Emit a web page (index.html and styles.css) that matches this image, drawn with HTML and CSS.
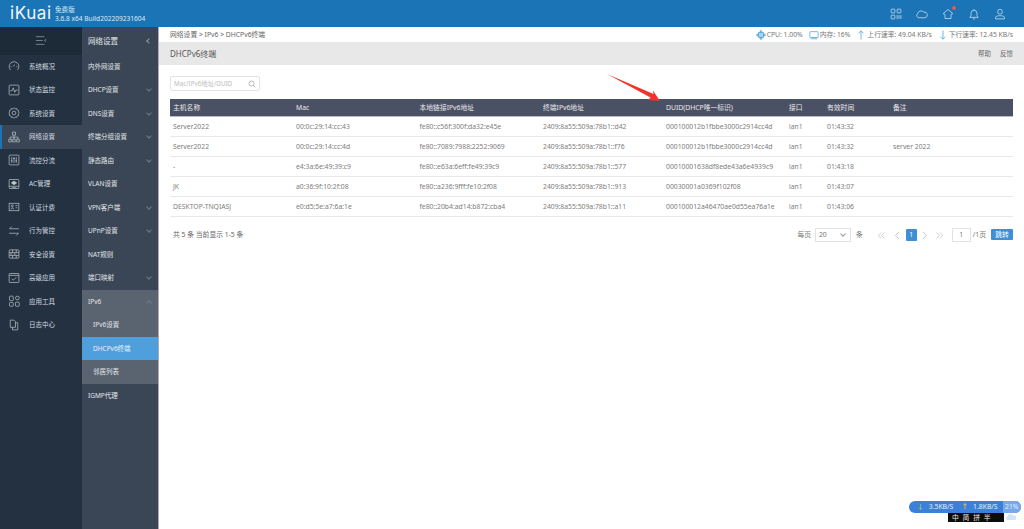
FILE: index.html
```html
<!DOCTYPE html>
<html lang="zh-CN">
<head>
    <meta charset="UTF-8">
    <title>iKuai</title>
    <link rel="stylesheet" href="styles.css">
</head>
<body>
    <header class="topbar">
        <div class="logo">iKuai</div>
        <div class="version">
            <div>免费版</div>
            <div>3.6.8 x64 Build202209231604</div>
        </div>
        <div class="top-icons">
            <svg class="top-icon" viewBox="0 0 16 16"><rect x="1.500" y="1.500" width="5" height="5" rx="1"/><rect x="9.500" y="1.500" width="5" height="5" rx="1"/><rect x="1.500" y="9.500" width="5" height="5" rx="1"/><path d="M9.500 9.500v5M12 9.500v5M14.500 9.500v5"/></svg>
            <svg class="top-icon" viewBox="0 0 16 16"><path d="M4 13a3 3 0 0 1-2-5.200A5 5 0 0 1 10.500 5.500 3.800 3.800 0 0 1 12 13z"/></svg>
            <span class="home-wrap">
                <svg class="top-icon" viewBox="0 0 16 16"><path d="M8 2 1.500 7.500l2.500 1V14h8V8.500l2.500-1z"/></svg>
                <span class="red-dot"></span>
            </span>
            <svg class="top-icon" viewBox="0 0 16 16"><path d="M2.500 12.500h11L12 10V7a4 4 0 0 0-8 0v3zM8 1.500V3M6.500 14.500h3"/></svg>
            <svg class="top-icon" viewBox="0 0 16 16"><circle cx="8" cy="5" r="3.200"/><path d="M2 14.500v-2c0-3 12-3 12 0v2z"/></svg>
        </div>
    </header>

    <div class="layout">
        <nav class="nav-main">
            <div class="nav-toggle">
                <svg class="toggle-icon" viewBox="0 0 14 12"><path d="M1 1.500h10M1 6h8M1 10.500h10M13 4.500 11 6l2 1.500"/></svg>
            </div>
            <a class="nav-item"><svg viewBox="0 0 16 16"><path d="M3.500 13.500a6.500 6.500 0 1 1 9 0M3.500 9h1.500M11 9h1.500M8.500 6 7.500 8.500"/></svg>系统概况</a>
            <a class="nav-item"><svg viewBox="0 0 16 16"><rect x="1.500" y="1.500" width="13" height="13" rx="1"/><path d="M3 9h2.500L7 5l2 6 1.500-3H13"/></svg>状态监控</a>
            <a class="nav-item"><svg viewBox="0 0 16 16"><path d="M8 1l1.500 1.500 2-.5.700 2 2 .7-.5 2L15 8l-1.300 1.300.5 2-2 .7-.7 2-2-.5L8 15l-1.500-1.500-2 .5-.7-2-2-.7.5-2L1 8l1.300-1.300-.5-2 2-.7.7-2 2 .5z"/><circle cx="8" cy="8" r="2.500"/></svg>系统设置</a>
            <a class="nav-item active"><svg viewBox="0 0 16 16"><path d="M6 1.500h4v4H6zM1 11h3.500v3.500H1zM6.200 11h3.500v3.500H6.200zM11.500 11H15v3.500h-3.500zM8 5.500V11M2.800 11V8.200h10.400V11"/></svg>网络设置</a>
            <a class="nav-item"><svg viewBox="0 0 16 16"><rect x="1.500" y="1.500" width="13" height="13" rx="1"/><path d="M5 4v8M8 4v8M11 4v8M3.800 9h2.400M6.800 6h2.400M9.800 9h2.400"/></svg>流控分流</a>
            <a class="nav-item"><svg viewBox="0 0 16 16"><rect x="1.500" y="2" width="13" height="12" rx="1"/><path d="M1.500 11h13M5 12.500h6"/><path class="solid" d="M8 4l3.500 2.500L8 9 4.500 6.500z"/></svg>AC管理</a>
            <a class="nav-item"><svg viewBox="0 0 16 16"><rect x="1.500" y="3" width="13" height="10"/><path d="M4 11c0-2.500 3.500-2.500 3.500 0M10 6h2.500M10 9h2.500"/><circle cx="5.800" cy="6.500" r="1.300"/></svg>认证计费</a>
            <a class="nav-item"><svg viewBox="0 0 16 16"><path d="M14.500 5H2l3-3M1.500 11H14l-3 3"/></svg>行为管控</a>
            <a class="nav-item"><svg viewBox="0 0 16 16"><rect x="1.500" y="2.500" width="13" height="11" rx="1"/><path d="M1.500 6.200h13M1.500 9.800h13M6 2.500v3.700M11 2.500v3.700M4 6.200v3.600M9 6.200v3.600M6 9.800v3.700M11 9.800v3.700"/></svg>安全设置</a>
            <a class="nav-item"><svg viewBox="0 0 16 16"><rect x="1.500" y="2" width="13" height="12" rx="1"/><path d="M1.500 4.500h13M5 9l2 2 4-4"/></svg>高级应用</a>
            <a class="nav-item"><svg viewBox="0 0 16 16"><rect x="2" y="1.500" width="5" height="6" rx="1"/><rect x="10" y="1.500" width="5" height="5" rx="2.500"/><rect x="2" y="10" width="5" height="5" rx="1"/><rect x="10" y="9.500" width="5" height="5.500" rx="1"/></svg>应用工具</a>
            <a class="nav-item"><svg viewBox="0 0 16 16"><path d="M3 1.500h5l2 2V11H3zM10 5h3v9.500H6V11"/></svg>日志中心</a>
        </nav>

        <aside class="nav-sub">
            <div class="sub-head">网络设置<span class="chev-left"></span></div>
            <a class="sub-item">内外网设置</a>
            <a class="sub-item">DHCP设置<span class="chev"></span></a>
            <a class="sub-item">DNS设置<span class="chev"></span></a>
            <a class="sub-item">终端分组设置<span class="chev"></span></a>
            <a class="sub-item">静态路由<span class="chev"></span></a>
            <a class="sub-item">VLAN设置</a>
            <a class="sub-item">VPN客户端<span class="chev"></span></a>
            <a class="sub-item">UPnP设置<span class="chev"></span></a>
            <a class="sub-item">NAT规则</a>
            <a class="sub-item">端口映射<span class="chev"></span></a>
            <a class="sub-item open">IPv6<span class="chev up"></span></a>
            <a class="sub-item open child">IPv6设置</a>
            <a class="sub-item child current">DHCPv6终端</a>
            <a class="sub-item open child">邻居列表</a>
            <a class="sub-item">IGMP代理</a>
        </aside>

        <main class="content">
            <div class="crumb-bar">
                <div class="crumbs">网络设置 &gt; IPv6 &gt; DHCPv6终端</div>
                <div class="stats">
                    <span class="stat"><svg viewBox="0 0 12 12" class="stat-icon cpu"><path d="M3 3h6v6H3zM1 5h2v2H1zM9 5h2v2H9zM5 1h2v2H5zM5 9h2v2H5z"/></svg>CPU: 1.00%</span>
                    <span class="stat"><svg viewBox="0 0 12 12" class="stat-icon"><rect x="1" y="2" width="10" height="7" rx="1"/><path d="M2 10.500h8"/></svg>内存: 16%</span>
                    <span class="stat"><svg viewBox="0 0 12 12" class="stat-icon"><path d="M6 11.500V1M3 4l3-3 3 3"/></svg>上行速率: 49.04 KB/s</span>
                    <span class="stat"><svg viewBox="0 0 12 12" class="stat-icon"><path d="M6 .5V11M3 8l3 3 3-3"/></svg>下行速率: 12.45 KB/s</span>
                </div>
            </div>
            <div class="title-bar">
                <span class="page-title">DHCPv6终端</span>
                <span class="title-links"><span>帮助</span><span>反馈</span></span>
            </div>

            <div class="panel">
                <div class="search">
                    <span>Mac/IPv6地址/DUID</span>
                    <svg viewBox="0 0 12 12"><circle cx="5.300" cy="5.300" r="3.800"/><path d="M8 8l2.800 2.800"/></svg>
                </div>

                <table class="grid">
                    <colgroup>
                        <col class="c-host"><col class="c-mac"><col class="c-link"><col class="c-addr"><col class="c-duid"><col class="c-if"><col class="c-time"><col>
                    </colgroup>
                    <thead>
                        <tr><th>主机名称</th><th>Mac</th><th>本地链接IPv6地址</th><th>终端IPv6地址</th><th>DUID(DHCP唯一标识)</th><th>接口</th><th>有效时间</th><th>备注</th></tr>
                    </thead>
                    <tbody>
                        <tr><td>Server2022</td><td>00:0c:29:14:cc:43</td><td>fe80::c56f:300f:da32:e45e</td><td>2409:8a55:509a:78b1::d42</td><td>000100012b1fbbe3000c2914cc4d</td><td>lan1</td><td>01:43:32</td><td></td></tr>
                        <tr><td>Server2022</td><td>00:0c:29:14:cc:4d</td><td>fe80::7089:7988:2252:9069</td><td>2409:8a55:509a:78b1::f76</td><td>000100012b1fbbe3000c2914cc4d</td><td>lan1</td><td>01:43:32</td><td>server 2022</td></tr>
                        <tr><td>-</td><td>e4:3a:6e:49:39:c9</td><td>fe80::e63a:6eff:fe49:39c9</td><td>2409:8a55:509a:78b1::577</td><td>00010001638df8ede43a6e4939c9</td><td>lan1</td><td>01:43:18</td><td></td></tr>
                        <tr><td>JK</td><td>a0:36:9f:10:2f:08</td><td>fe80::a236:9fff:fe10:2f08</td><td>2409:8a55:509a:78b1::913</td><td>00030001a0369f102f08</td><td>lan1</td><td>01:43:07</td><td></td></tr>
                        <tr><td>DESKTOP-TNQIASJ</td><td>e0:d5:5e:a7:6a:1e</td><td>fe80::20b4:ad14:b872:cba4</td><td>2409:8a55:509a:78b1::a11</td><td>000100012a46470ae0d55ea76a1e</td><td>lan1</td><td>01:43:06</td><td></td></tr>
                    </tbody>
                </table>

                <div class="table-foot">
                    <span class="total">共 5 条 当前显示 1-5 条</span>
                    <div class="pager">
                        <span>每页</span>
                        <span class="page-size">20<span class="chev grey"></span></span>
                        <span class="after-size">条</span>
                        <svg class="pg" viewBox="0 0 14 12"><path d="M6.500 1.500 2 6l4.500 4.500M11.500 1.500 7 6l4.500 4.500"/></svg>
                        <svg class="pg prev" viewBox="0 0 8 12"><path d="M6.500 1.500 2 6l4.500 4.500"/></svg>
                        <span class="page-current">1</span>
                        <svg class="pg next" viewBox="0 0 8 12"><path d="M1.500 1.500 6 6l-4.500 4.500"/></svg>
                        <svg class="pg" viewBox="0 0 14 12"><path d="M2.500 1.500 7 6l-4.500 4.500M7.500 1.500 12 6l-4.500 4.500"/></svg>
                        <span class="page-input">1</span>
                        <span>/1页</span>
                        <span class="go">跳转</span>
                    </div>
                </div>
            </div>
        </main>
    </div>

    <!-- annotation drawn on the screenshot -->
    <svg class="arrow" viewBox="0 0 56 30"><path d="M1 1 L47.500 21 L47 17.500 L54 28 L42 27 L44.500 24.500 Z"/></svg>

    <div class="tray">
        <div class="speed">
            <span class="tray-down">↓</span><span>3.5KB/S</span>
            <span class="tray-up">↑</span><span>1.8KB/S</span>
            <span class="tray-pct">21%</span>
        </div>
        <div class="tray-row">
            <div class="ime">中 简 拼 半</div>
            <svg class="tray-cloud" viewBox="0 0 10 7"><path d="M1 7a2 2 0 0 1 .5-3.500A3 3 0 0 1 7 2.500 2.400 2.400 0 0 1 9 7z"/></svg>
        </div>
    </div>
</body>
</html>
```

FILE: styles.css
```css
* {
    box-sizing: border-box;
}

html, body {
    height: 100%;
}

body {
    margin: 0;
    overflow: hidden;
    background: #fff;
    color: #666;
    font-family: "Noto Sans", "Noto Sans CJK SC", sans-serif;
    font-size: 6.8px;
    line-height: 1.2;
}

svg {
    fill: none;
    stroke: currentColor;
}

/* top bar */
.topbar {
    height: 27px;
    background: #1b74b6;
    color: #fff;
    display: flex;
    align-items: center;
    padding-left: 10px;
}

.logo {
    font-family: "Inter", "Noto Sans", sans-serif;
    font-size: 17px;
    letter-spacing: 0.6px;
    width: 45px;
    color: #f2f7fb;
}

.version {
    color: #dcebf5;
    line-height: 8.500px;
    font-size: 6.600px;
    padding-top: 2px;
}

.top-icons {
    margin-left: auto;
    display: flex;
    align-items: center;
    gap: 14px;
    padding-right: 18px;
    color: #cfe3f2;
}

.top-icon {
    display: block;
    width: 12px;
    height: 12px;
    stroke-width: 1;
}

.home-wrap {
    position: relative;
    display: block;
}

.red-dot {
    position: absolute;
    top: -2px;
    right: -2px;
    width: 4px;
    height: 4px;
    border-radius: 50%;
    background: #f0524f;
}

/* layout */
.layout {
    display: flex;
    height: 502px;
}

.nav-main {
    width: 82px;
    background: #233140;
    color: #d5dbe1;
    flex-shrink: 0;
    font-size: 6.500px;
}

.nav-toggle {
    height: 27.500px;
    background: #1d2a38;
    display: flex;
    align-items: center;
    justify-content: center;
    color: #9aa5b0;
}

.toggle-icon {
    width: 12px;
    height: 11px;
    stroke-width: 0.8;
}

.nav-item {
    display: flex;
    align-items: center;
    height: 23.500px;
    padding: 1px 0 0 6px;
    border-left: 2px solid transparent;
    gap: 9px;
}

.nav-item svg {
    width: 12px;
    height: 12px;
    flex-shrink: 0;
    stroke-width: 0.9;
    color: #c3cbd3;
    margin-top: -1px;
}

.nav-item svg .solid {
    fill: currentColor;
}

.nav-item.active {
    background: #3a4656;
    border-left-color: #1b74b6;
}

.nav-sub {
    width: 77px;
    background: #3a4656;
    color: #e3e6ea;
    flex-shrink: 0;
    border-right: 1px solid #a9adb3;
    font-size: 6.500px;
}

.sub-head {
    height: 27.500px;
    display: flex;
    align-items: center;
    padding: 2px 0 0 6px;
    font-size: 7.500px;
    position: relative;
}

.sub-item {
    display: flex;
    align-items: center;
    height: 23.500px;
    padding: 1px 0 0 6px;
    position: relative;
}

.sub-item.open {
    background: #5a6470;
}

.sub-item.child {
    padding-left: 11px;
}

.sub-item.current {
    background: #4f9fdc;
    color: #e6f2fb;
}

.chev, .chev-left {
    position: absolute;
    width: 4px;
    height: 4px;
    border-right: 1px solid #6f7b88;
    border-bottom: 1px solid #6f7b88;
}

.chev {
    right: 7px;
    top: 9px;
    transform: rotate(45deg);
}

.chev.up {
    top: 11px;
    transform: rotate(225deg);
}

.chev-left {
    right: 7px;
    top: 12px;
    transform: rotate(135deg);
    border-color: #8c97a3;
}

/* content */
.content {
    flex: 1;
    min-width: 0;
}

.crumb-bar {
    height: 15px;
    display: flex;
    align-items: center;
    justify-content: space-between;
    padding: 1px 11px 0 11px;
}

.stats {
    display: flex;
    gap: 6px;
    color: #777;
}

.stat {
    display: flex;
    align-items: center;
    gap: 1px;
}

.stat-icon {
    width: 10px;
    height: 10px;
    color: #54a7e0;
    stroke-width: 1;
}

.stat-icon.cpu {
    fill: #a9d3f0;
}

.title-bar {
    height: 23px;
    background: #e8e8e8;
    display: flex;
    align-items: center;
    justify-content: space-between;
    padding: 0 11px;
}

.page-title {
    font-size: 8px;
    color: #555;
}

.title-links {
    display: flex;
    gap: 9px;
    font-size: 6.500px;
    color: #666;
}

.panel {
    padding: 11px 11px 0 11px;
}

.search {
    width: 90px;
    height: 15px;
    border: 1px solid #e3e3e3;
    border-radius: 2px;
    display: flex;
    align-items: center;
    justify-content: space-between;
    padding: 0 3px;
    color: #bdbdbd;
    font-size: 6.300px;
}

.search svg {
    width: 8px;
    height: 8px;
    color: #999;
}

.grid {
    width: 843px;
    margin-top: 8px;
    border-collapse: collapse;
    table-layout: fixed;
}

.c-host { width: 123px; }
.c-mac { width: 123.500px; }
.c-link { width: 123.500px; }
.c-addr { width: 123px; }
.c-duid { width: 123px; }
.c-if { width: 38px; }
.c-time { width: 66px; }

.grid th {
    height: 17px;
    background: #4b5164;
    color: #e8e9ec;
    font-weight: 400;
    text-align: left;
    padding: 1px 3px 0;
    border-bottom: 1px solid #b9bcc4;
}

.grid td {
    height: 20.200px;
    padding: 1px 3px 0;
    color: #7d7d7d;
    border-bottom: 1px solid #e9e9e9;
    white-space: nowrap;
}

.table-foot {
    display: flex;
    align-items: center;
    justify-content: space-between;
    margin-top: 11px;
}

.total {
    padding-left: 3px;
    color: #666;
}

.pager {
    display: flex;
    align-items: center;
    color: #777;
}

.page-size {
    position: relative;
    width: 36px;
    height: 14px;
    border: 1px solid #e3e3e3;
    margin-left: 4px;
    padding-left: 3px;
    line-height: 12px;
}

.page-size .chev {
    top: 3px;
    right: 5px;
}

.chev.grey {
    border-color: #999;
}

.after-size {
    margin: 0 14px 0 5px;
}

.pg {
    width: 9px;
    height: 9px;
    color: #b5b5b5;
    stroke-width: 1;
}

.pg.prev {
    width: 6px;
    margin: 0 6px 0 8px;
}

.pg.next {
    width: 6px;
    margin: 0 7px 0 5px;
}

.page-current {
    width: 11px;
    height: 12px;
    background: #3d8fd6;
    color: #fff;
    border-radius: 1px;
    text-align: center;
    line-height: 12px;
}

.page-input {
    width: 19px;
    height: 14px;
    border: 1px solid #e3e3e3;
    text-align: center;
    line-height: 12px;
    margin: 0 2px 0 8px;
}

.go {
    margin: -2px 0 0 5px;
    width: 22px;
    height: 11px;
    background: #3d8fd6;
    color: #fff;
    text-align: center;
    line-height: 11px;
    border-radius: 1px;
}

/* things lying over the page */
.arrow {
    position: absolute;
    left: 606px;
    top: 73px;
    width: 56px;
    height: 30px;
    fill: #f0352b;
    stroke: none;
}

.tray {
    position: absolute;
    left: 909px;
    top: 501px;
    width: 112px;
}

.speed {
    height: 12px;
    border-radius: 6px;
    background: #3d80dc;
    color: #e6eefb;
    display: flex;
    align-items: center;
    padding-left: 8px;
    gap: 5px;
    overflow: hidden;
}

.tray-down {
    color: #8bd14b;
    font-weight: 700;
}

.tray-up {
    color: #f5b92b;
    font-weight: 700;
    margin-left: 3px;
}

.tray-pct {
    margin-left: auto;
    background: #76a8ea;
    height: 12px;
    width: 21px;
    line-height: 12px;
    text-align: center;
}

.tray-row {
    display: flex;
    align-items: flex-start;
}

.ime {
    margin-left: 39px;
    width: 56px;
    height: 9px;
    background: #0c0c0c;
    color: #eee;
    line-height: 9px;
    padding-left: 4px;
    word-spacing: 2px;
}

.tray-cloud {
    width: 10px;
    height: 7px;
    margin-left: 2px;
    fill: #cfe4f7;
    stroke: none;
}
```
